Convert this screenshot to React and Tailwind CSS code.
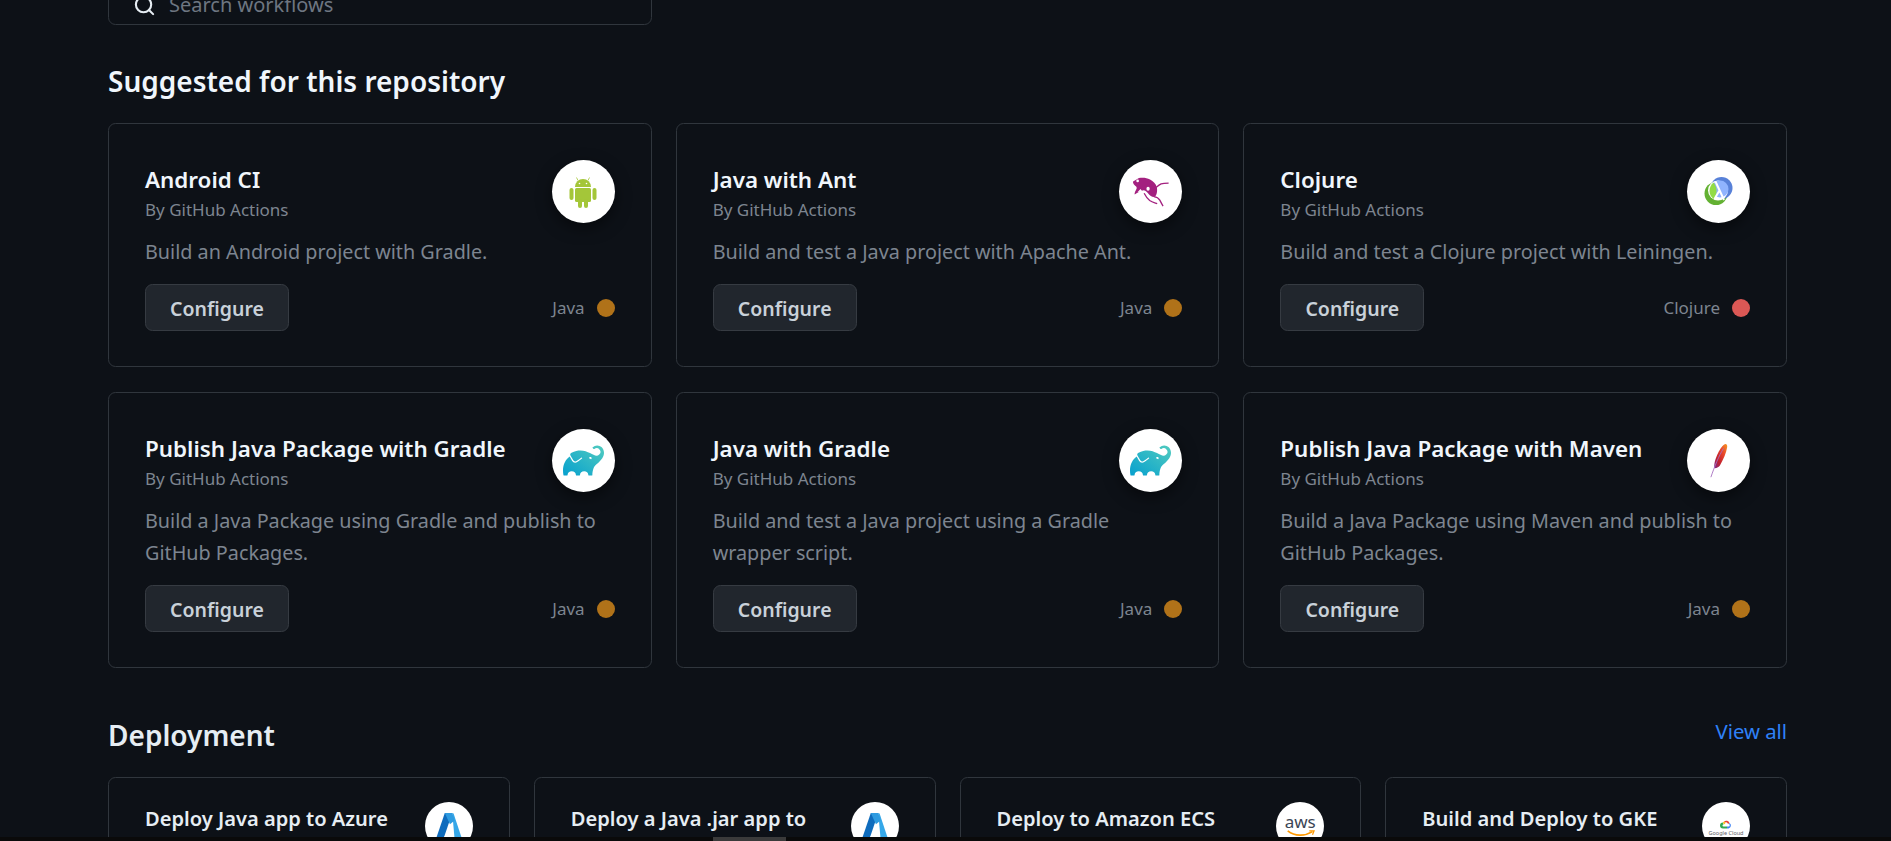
import React from "react";
import { Search } from "lucide-react";
import { SiGradle } from "react-icons/si";

const AndroidLogo = () => (
  <svg viewBox="0 0 28 33" className="w-[28px] h-[33px]" fill="#a4c639">
    <path d="M6 12a8 8 0 0 1 16 0z" />
    <path d="M9 5.500 7.500 2.500M19 5.500l1.500-3" stroke="#a4c639" strokeWidth="0.8" />
    <circle cx="10.500" cy="8.500" r="0.8" fill="#fff" />
    <circle cx="17.500" cy="8.500" r="0.8" fill="#fff" />
    <rect x="6" y="13" width="16" height="14" rx="1.500" />
    <rect x="0.500" y="13" width="4" height="12" rx="2" />
    <rect x="23.500" y="13" width="4" height="12" rx="2" />
    <rect x="9" y="24" width="4" height="9" rx="2" />
    <rect x="15" y="24" width="4" height="9" rx="2" />
  </svg>
);

// coordinates traced at 3x from the reference
const AntLogo = () => (
  <svg viewBox="20 24 114 92" className="w-[38px] h-[30px]" fill="#a3207f">
    <path d="M22 38 40 27c12-2 24-1 34 5 10 5 18 13 21 24 2 10 0 23-6 28-5 3-12 0-18-6-5-6-10-13-16-13-10 1-18 6-28 13-2-6 4-13 6-19 1-6-3-7-6-10-3-3-6-7-5-9z" />
    <circle cx="36" cy="36" r="4" fill="#fff" />
    <ellipse cx="68" cy="60" rx="5" ry="6" fill="#fff" />
    <path d="M36 70l9-9 6 8z" fill="#fff" />
    <path d="M90 58c6-5 11-10 18-13 7-2 15-2 23-2" fill="none" stroke="#a3207f" strokeWidth="4" />
    <path d="M86 84c8 1 14 4 18 11 3 6 6 12 10 18" fill="none" stroke="#a3207f" strokeWidth="4" />
    <path d="M56 74c4 8 9 16 17 22 7 5 15 7 23 10" fill="none" stroke="#a3207f" strokeWidth="4" />
  </svg>
);

const ClojureLogo = () => (
  <svg viewBox="0 0 29 29" className="w-[29px] h-[29px]">
    <circle cx="12" cy="16.500" r="11.500" fill="#63b132" />
    <circle cx="17.500" cy="11" r="11" fill="#5881d8" />
    <circle cx="14" cy="13.500" r="10" fill="#fff" />
    <circle cx="16" cy="12" r="8.500" fill="#90b4fe" />
    <path d="M9.500 5.500c-2.500 2-4 5-4 8.500 0 3 1.500 6 4 8 2-2.500 3-5 3-8s-1-6-3-8.500z" fill="#91dc47" />
    <path d="M11.500 4.500 20 23M15.500 13.500 11 21" stroke="#fff" strokeWidth="2" fill="none" />
  </svg>
);

const GradleLogo = () => (
  <>
    <svg className="absolute w-0 h-0">
      <defs>
        <linearGradient id="gradle" x1="0" y1="1" x2="1" y2="0">
          <stop offset="0" stopColor="#06a0ce" />
          <stop offset="1" stopColor="#51cbbf" />
        </linearGradient>
      </defs>
    </svg>
    <SiGradle className="text-[41px] fill-[url(#gradle)]" />
  </>
);

const FeatherLogo = () => (
  <svg viewBox="0 0 20 40" className="w-[18px] h-[36px]">
    <defs>
      <linearGradient id="feather" x1="1" y1="0" x2="0" y2="1">
        <stop offset="0" stopColor="#f69923" />
        <stop offset="0.35" stopColor="#e8452c" />
        <stop offset="0.7" stopColor="#be202e" />
        <stop offset="1" stopColor="#7d2a8b" />
      </linearGradient>
    </defs>
    <path d="M17 1c2 0 2.500 2 2 4-1 6-4 13-8 20-1 1.500-3 3-6 3-1-4 1-11 4-17 2-4 5-9 8-10z" fill="url(#feather)" />
    <path d="M15 6C10 14 5 26 1 38" stroke="#a76fc0" strokeWidth="1" fill="none" />
  </svg>
);

const AzureLogo = () => (
  <svg viewBox="0 0 32 30" className="w-[30px] h-[28px]">
    <path d="M11.500 1h8L10 29H2z" fill="#0f6cbd" />
    <path d="M19.500 1c.8 0 1.200.4 1.500 1l9 27h-8z" fill="#35a7e8" />
    <path d="M11.500 1h8l2.500 8-5 4z" fill="#2e9be0" />
    <path d="M8 29l7-6 3-5 4 11z" fill="#fff" />
  </svg>
);

const AwsLogo = () => (
  <div className="flex flex-col items-center">
    <span className="text-[#3b4555] text-[17px] leading-[16px]">aws</span>
    <svg viewBox="0 0 34 10" className="w-[29px] h-[8px]">
      <path d="M1 1c9 7 21 7 31 1" stroke="#f90" strokeWidth="2" fill="none" />
      <path d="M28 1l6 0-2 5" stroke="#f90" strokeWidth="1.500" fill="none" />
    </svg>
  </div>
);

const GoogleCloudLogo = () => (
  <div className="flex flex-col items-center pt-[4px]">
    <svg viewBox="0 0 24 20" className="w-[12px] h-[10px]">
      <path d="M8 5a7 7 0 0 1 11 3l-3 2a4 4 0 0 0-6-3z" fill="#ea4335" />
      <path d="M19 8a6 6 0 0 1-2 11h-3v-4h3a2 2 0 0 0 0-5z" fill="#4285f4" />
      <path d="M6 19a6 6 0 0 1 0-12l1 4a2 2 0 0 0 0 4h7v4z" fill="#34a853" />
      <path d="M6 7a6 6 0 0 1 2-2l3 3-3 3z" fill="#fbbc05" />
    </svg>
    <span className="text-[5.5px] leading-[9px] text-[#5f6368] whitespace-nowrap">Google Cloud</span>
  </div>
);

const suggested = [
  { title: "Android CI", desc: "Build an Android project with Gradle.", lang: "Java", logo: <AndroidLogo /> },
  { title: "Java with Ant", desc: "Build and test a Java project with Apache Ant.", lang: "Java", logo: <AntLogo /> },
  { title: "Clojure", desc: "Build and test a Clojure project with Leiningen.", lang: "Clojure", logo: <ClojureLogo /> },
  { title: "Publish Java Package with Gradle", desc: "Build a Java Package using Gradle and publish to GitHub Packages.", lang: "Java", logo: <GradleLogo /> },
  { title: "Java with Gradle", desc: "Build and test a Java project using a Gradle wrapper script.", lang: "Java", logo: <GradleLogo /> },
  { title: "Publish Java Package with Maven", desc: "Build a Java Package using Maven and publish to GitHub Packages.", lang: "Java", logo: <FeatherLogo /> },
];

const deployment = [
  { title: "Deploy Java app to Azure", logo: <AzureLogo /> },
  { title: "Deploy a Java .jar app to", logo: <AzureLogo /> },
  { title: "Deploy to Amazon ECS", logo: <AwsLogo /> },
  { title: "Build and Deploy to GKE", logo: <GoogleCloudLogo /> },
];

const SuggestedCard = ({ item }) => (
  <div className="flex flex-col border border-[#30363d] rounded-[7.5px] px-[36px] pt-[37px] pb-[35px]">
    <div className="flex justify-between">
      <div className="min-w-0">
        <h3 className="text-[22.4px] leading-[38px] font-semibold text-[#f0f6fc] whitespace-nowrap">{item.title}</h3>
        <p className="text-[17px] leading-[22px] text-[#7d8590]">By GitHub Actions</p>
      </div>
      <div className="shrink-0 -mt-[1px] w-[63px] h-[63px] rounded-full bg-white flex items-center justify-center shadow-[0_5px_15px_rgba(0,0,0,0.5)]">
        {item.logo}
      </div>
    </div>
    <p className="mt-[13px] text-[19.8px] leading-[32px] text-[#7d8590]">{item.desc}</p>
    <div className="flex items-center justify-between mt-[16px]">
      <button className="w-[144px] h-[47px] pt-[2px] rounded-[7.5px] bg-[#21262d] border border-[#363b42] text-[#c9d1d9] text-[19.5px] font-semibold">
        Configure
      </button>
      <div className="flex items-center gap-[12px] text-[17px] text-[#7d8590]">
        <span>{item.lang}</span>
        <span className={`w-[18px] h-[18px] rounded-full ${item.lang === "Java" ? "bg-[#b07219]" : "bg-[#db5855]"}`} />
      </div>
    </div>
  </div>
);

const DeployCard = ({ item }) => (
  <div className="flex justify-between h-[100px] border border-[#30363d] rounded-[7.5px] px-[36px] pt-[24px]">
    <h3 className="text-[20.1px] leading-[28px] pt-[3px] font-semibold text-[#e6edf3] whitespace-nowrap">{item.title}</h3>
    <div className="shrink-0 w-[48px] h-[48px] rounded-full bg-white flex items-center justify-center">{item.logo}</div>
  </div>
);

const App = () => {
  return (
    <div className="h-[841px] flex flex-col overflow-hidden bg-[#0d1117] font-['Noto_Sans',sans-serif]">
      <main className="flex-1 min-h-0 overflow-hidden pl-[108px] pr-[104px]">
        <div className="-mt-[15px] h-[40px] w-[544px] flex items-center gap-[13px] border border-[#30363d] rounded-[7.5px] px-[24px]">
          <Search className="w-[23px] h-[23px] text-[#e6edf3]" strokeWidth={2.2} />
          <span className="text-[20px] text-[#6e7681]">Search workflows</span>
        </div>

        <h2 className="mt-[38px] text-[28px] leading-[36px] font-semibold text-[#f0f6fc]">Suggested for this repository</h2>
        <div className="mt-[24px] grid grid-cols-3 gap-x-[24px] gap-y-[25px]">
          {suggested.map((item) => (
            <SuggestedCard key={item.title} item={item} />
          ))}
        </div>

        <div className="mt-[49px] flex items-center justify-between">
          <h2 className="text-[28px] leading-[36px] font-semibold text-[#e6edf3]">Deployment</h2>
          <a className="text-[20.3px] text-[#2f81f7] -mt-[8px]">View all</a>
        </div>
        <div className="mt-[24px] grid grid-cols-4 gap-[24px]">
          {deployment.map((item) => (
            <DeployCard key={item.title} item={item} />
          ))}
        </div>
      </main>
      <div className="h-[4px] shrink-0 bg-[#0a0a0a] pl-[713px]">
        <div className="w-[73px] h-full bg-[#3a3a3a]" />
      </div>
    </div>
  );
};

export default App;
